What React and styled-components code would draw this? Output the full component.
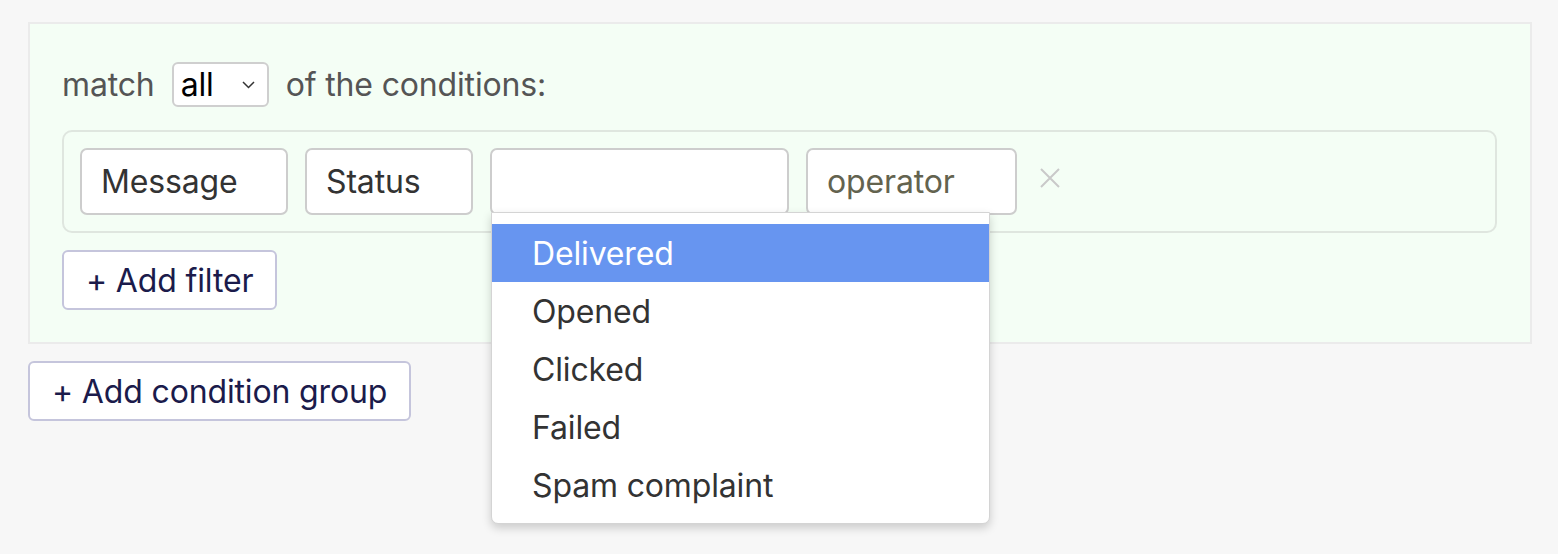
import styled, { createGlobalStyle } from "styled-components";

const GlobalStyle = createGlobalStyle`
  body {
    margin: 0;
    background: #f7f7f7;
    font-family: Inter, "Noto Sans", sans-serif;
    letter-spacing: -0.15px;
  }
`;

const Page = styled.div`
  min-height: 554px;
  box-sizing: border-box;
  padding: 22px 26px 0 28px;
  display: flex;
  flex-direction: column;
  align-items: flex-start;
  gap: 17px;
`;

const GroupPanel = styled.div`
  align-self: stretch;
  background: #f4fef5;
  border: 2px solid #ebebeb;
  padding: 38px 33px 32px 32px;
  display: flex;
  flex-direction: column;
  align-items: flex-start;
`;

const MatchRow = styled.div`
  display: flex;
  align-items: center;
  gap: 17px;
  font-size: 32px;
  color: #555;
  margin-bottom: 23px;
`;

const MatchSelect = styled.div`
  width: 97px;
  height: 45px;
  box-sizing: border-box;
  border: 2px solid #cfcfcf;
  border-radius: 6px;
  background: #fff;
  display: flex;
  align-items: center;
  justify-content: space-between;
  padding: 0 12px 0 7px;
  color: #000;
  font-size: 32px;
`;

const FilterBox = styled.div`
  align-self: stretch;
  border: 2px solid #dfe6df;
  border-radius: 10px;
  padding: 16px;
  display: flex;
  align-items: center;
  gap: 17px;
  margin-bottom: 17px;
`;

const Field = styled.div`
  position: relative;
  width: ${(p) => p.$w}px;
  height: 67px;
  box-sizing: border-box;
  border: 2px solid #cdcdcd;
  border-radius: 7px;
  background: #fff;
  display: flex;
  align-items: center;
  padding-left: 19px;
  font-size: 32px;
  color: ${(p) => (p.$placeholder ? "#63634f" : "#333")};
`;

const RemoveIcon = styled.svg`
  width: 22px;
  height: 22px;
  margin-left: 5px;
  margin-top: -8px;
`;

const Menu = styled.ul`
  position: absolute;
  top: 62px;
  left: -1px;
  width: 497px;
  margin: 0;
  padding: 11px 0 9px;
  list-style: none;
  background: #fff;
  border: 1px solid #d4d4d4;
  border-radius: 0 0 7px 7px;
  box-shadow: 0 4px 10px rgba(0, 0, 0, 0.18);
  z-index: 10;
`;

const MenuItem = styled.li`
  height: 58px;
  display: flex;
  align-items: center;
  padding-left: 40px;
  font-size: 32px;
  color: ${(p) => (p.$active ? "#fff" : "#333")};
  background: ${(p) => (p.$active ? "#6795f0" : "transparent")};
`;

const OutlineButton = styled.button`
  height: 60px;
  box-sizing: border-box;
  padding: 0 22px;
  border: 2px solid #c5c5dc;
  border-radius: 6px;
  background: #fff;
  color: #1b1b4b;
  font-family: inherit;
  letter-spacing: inherit;
  font-size: 32px;
  cursor: pointer;
`;

const statuses = ["Delivered", "Opened", "Clicked", "Failed", "Spam complaint"];

export default function App() {
  return (
    <>
      <GlobalStyle />
      <Page>
        <GroupPanel>
          <MatchRow>
            <span>match</span>
            <MatchSelect>
              <span>all</span>
              <svg width="13" height="8" viewBox="0 0 13 8">
                <path d="M1 1l5.5 5.5L12 1" fill="none" stroke="#333" strokeWidth="1.5" />
              </svg>
            </MatchSelect>
            <span>of the conditions:</span>
          </MatchRow>
          <FilterBox>
            <Field $w={208}>Message</Field>
            <Field $w={168}>Status</Field>
            <Field $w={299}>
              <Menu>
                {statuses.map((s, i) => (
                  <MenuItem key={s} $active={i === 0}>
                    {s}
                  </MenuItem>
                ))}
              </Menu>
            </Field>
            <Field $w={211} $placeholder>
              operator
            </Field>
            <RemoveIcon viewBox="0 0 22 22">
              <path d="M2 2l18 18M20 2L2 20" stroke="#c9c9c9" strokeWidth="2" />
            </RemoveIcon>
          </FilterBox>
          <OutlineButton>+ Add filter</OutlineButton>
        </GroupPanel>
        <OutlineButton>+ Add condition group</OutlineButton>
      </Page>
    </>
  );
}
